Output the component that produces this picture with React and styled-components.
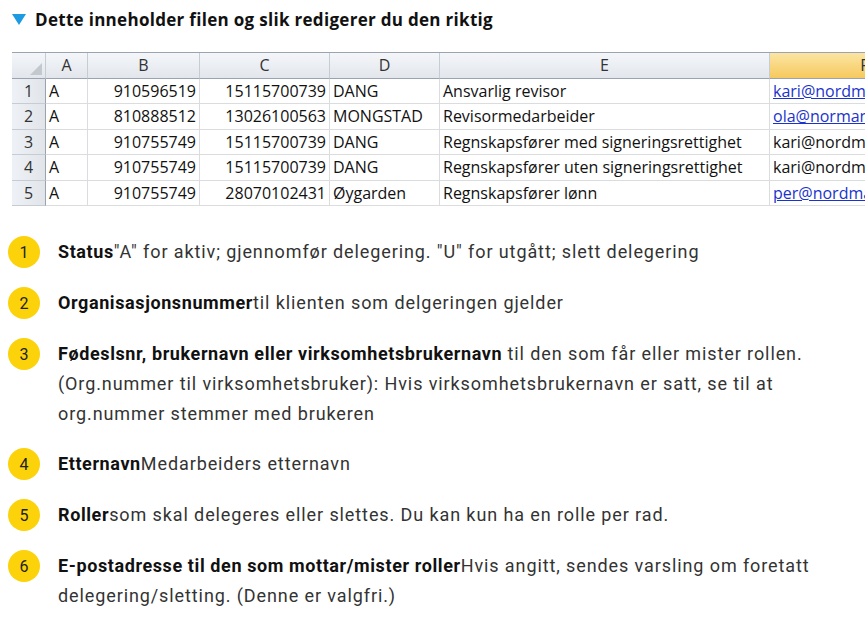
import React from "react";
import styled, { createGlobalStyle } from "styled-components";

const Global = createGlobalStyle`
  body { margin: 0; background: #fff; font-family: Roboto, "Noto Sans", sans-serif; overflow: hidden; }
`;

const Page = styled.div`
  width: 865px;
  height: 635px;
  overflow: hidden;
  position: relative;
`;

const Title = styled.div`
  display: flex;
  align-items: center;
  gap: 9px;
  padding: 8px 0 0 12px;
  height: 22px;
  font-family: "Open Sans", sans-serif;
  font-weight: 700;
  font-size: 17px;
  letter-spacing: 0.3px;
  color: #111;
`;

const Triangle = styled.span`
  width: 0;
  height: 0;
  border-left: 7px solid transparent;
  border-right: 7px solid transparent;
  border-top: 11px solid #1c9be2;
`;

const Sheet = styled.div`
  margin: 22px 0 0 12px;
  display: grid;
  grid-template-columns: 34px 42px 112px 130px 110px 330px 190px;
  grid-auto-rows: 25.5px;
  font-family: "Open Sans", sans-serif;
  font-size: 16px;
  color: #111;
  width: 948px;
  border-top: 1px solid #9aa4b0;
`;

const Head = styled.div`
  background: ${p => (p.$active ? "linear-gradient(#fbe5a3,#f6c95e)" : "linear-gradient(#f4f6f9,#e2e6ec)")};
  border-right: 1px solid #c6ccd4;
  border-bottom: 1px solid #9aa4b0;
  display: flex;
  align-items: center;
  justify-content: center;
  color: #333;
  position: relative;
`;

const Corner = styled(Head)`
  &::after {
    content: "";
    position: absolute;
    right: 3px;
    bottom: 3px;
    border-left: 12px solid transparent;
    border-bottom: 12px solid #c3c8ce;
  }
`;

const RowNum = styled.div`
  background: linear-gradient(90deg,#eef1f5,#e1e5ea);
  border-right: 1px solid #9aa4b0;
  border-bottom: 1px solid #c6ccd4;
  display: flex;
  align-items: center;
  justify-content: center;
  color: #333;
`;

const Cell = styled.div`
  border-right: 1px solid #dadcdd;
  border-bottom: 1px solid #dadcdd;
  display: flex;
  align-items: center;
  justify-content: ${p => (p.$num ? "flex-end" : "flex-start")};
  padding: 0 3px;
  white-space: nowrap;
  overflow: hidden;
  color: ${p => (p.$link ? "#1a33cc" : "#111")};
  text-decoration: ${p => (p.$link ? "underline" : "none")};
`;

const List = styled.div`
  margin-top: 30px;
  display: flex;
  flex-direction: column;
  gap: 19px;
  padding-left: 8px;
`;

const Item = styled.div`
  display: flex;
  gap: 18px;
  align-items: flex-start;
`;

const Badge = styled.div`
  flex: none;
  width: 32px;
  height: 32px;
  border-radius: 50%;
  background: #fcd20a;
  display: flex;
  align-items: center;
  justify-content: center;
  font-size: 16px;
  color: #222;
`;

const Text = styled.div`
  font-size: 18px;
  letter-spacing: 0.9px;
  line-height: 30px;
  color: #333;
  margin-top: 1px;
  b { color: #111; font-weight: 700; letter-spacing: 0.6px; }
`;

const rows = [
  ["1", "A", "910596519", "15115700739", "DANG", "Ansvarlig revisor", "kari@nordmann.no", true],
  ["2", "A", "810888512", "13026100563", "MONGSTAD", "Revisormedarbeider", "ola@normann.no", true],
  ["3", "A", "910755749", "15115700739", "DANG", "Regnskapsfører med signeringsrettighet", "kari@nordmann.no", false],
  ["4", "A", "910755749", "15115700739", "DANG", "Regnskapsfører uten signeringsrettighet", "kari@nordmann.no", false],
  ["5", "A", "910755749", "28070102431", "Øygarden", "Regnskapsfører lønn", "per@nordmann.no", true],
];

const items = [
  [<b>Status</b>, "\"A\" for aktiv; gjennomfør delegering. \"U\" for utgått; slett delegering"],
  [<b>Organisasjonsnummer</b>, "til klienten som delgeringen gjelder"],
  [<b>Fødeslsnr, brukernavn eller virksomhetsbrukernavn</b>, " til den som får eller mister rollen.", <br />, " (Org.nummer til virksomhetsbruker): Hvis virksomhetsbrukernavn er satt, se til at", <br />, " org.nummer stemmer med brukeren"],
  [<b>Etternavn</b>, "Medarbeiders etternavn"],
  [<b>Roller</b>, "som skal delegeres eller slettes. Du kan kun ha en rolle per rad."],
  [<b>E-postadresse til den som mottar/mister roller</b>, "Hvis angitt, sendes varsling om foretatt", <br />, " delegering/sletting. (Denne er valgfri.)"],
];

export default function App() {
  return (
    <Page>
      <Global />
      <Title>
        <Triangle />
        Dette inneholder filen og slik redigerer du den riktig
      </Title>
      <Sheet>
        <Corner />
        {["A", "B", "C", "D", "E", "F"].map(h => (
          <Head key={h} $active={h === "F"}>{h}</Head>
        ))}
        {rows.map(r => (
          <React.Fragment key={r[0]}>
            <RowNum>{r[0]}</RowNum>
            <Cell>{r[1]}</Cell>
            <Cell $num>{r[2]}</Cell>
            <Cell $num>{r[3]}</Cell>
            <Cell>{r[4]}</Cell>
            <Cell>{r[5]}</Cell>
            <Cell $link={r[7]}>{r[6]}</Cell>
          </React.Fragment>
        ))}
      </Sheet>
      <List>
        {items.map((parts, i) => (
          <Item key={i}>
            <Badge>{i + 1}</Badge>
            <Text>{parts.map((p, j) => <React.Fragment key={j}>{p}</React.Fragment>)}</Text>
          </Item>
        ))}
      </List>
    </Page>
  );
}
